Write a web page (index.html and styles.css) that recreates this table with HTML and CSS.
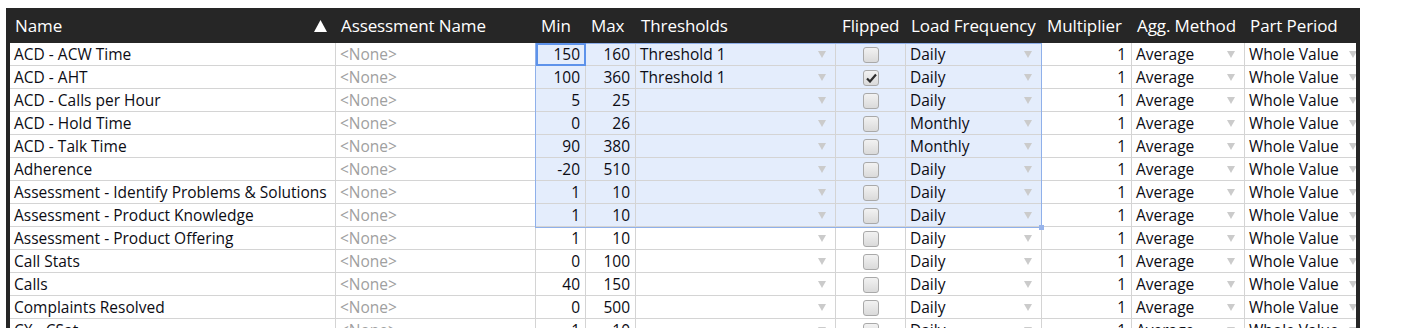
FILE: index.html
```html
<!DOCTYPE html>
<html>
<head>
<meta charset="utf-8">
<link rel="stylesheet" href="styles.css">
</head>
<body>
<div class="frame">
  <div class="grid-wrap">
    <table class="grid">
      <colgroup>
        <col class="c-name"><col class="c-assess"><col class="c-num"><col class="c-num"><col class="c-thr"><col class="c-flip"><col class="c-load"><col class="c-mult"><col class="c-agg"><col class="c-part">
      </colgroup>
      <thead>
        <tr>
          <th class="h-name">Name<svg class="sort" width="13" height="12" viewBox="0 0 13 12"><path d="M6.5 0L13 12H0Z"/></svg></th>
          <th>Assessment Name</th>
          <th class="h-num">Min</th>
          <th class="h-num">Max</th>
          <th>Thresholds</th>
          <th class="h-flip">Flipped</th>
          <th>Load Frequency</th>
          <th>Multiplier</th>
          <th>Agg. Method</th>
          <th>Part Period</th>
        </tr>
      </thead>
      <tbody id="rows"></tbody>
    </table>
    <div class="selection"></div>
    <div class="active-cell"></div>
    <div class="handle"></div>
  </div>
</div>
<script src="app.js"></script>
</body>
</html>
```

FILE: app.js
```js
const data = [
  ["ACD - ACW Time", 150, 160, "Threshold 1", false, "Daily"],
  ["ACD - AHT", 100, 360, "Threshold 1", true, "Daily"],
  ["ACD - Calls per Hour", 5, 25, "", false, "Daily"],
  ["ACD - Hold Time", 0, 26, "", false, "Monthly"],
  ["ACD - Talk Time", 90, 380, "", false, "Monthly"],
  ["Adherence", -20, 510, "", false, "Daily"],
  ["Assessment - Identify Problems & Solutions", 1, 10, "", false, "Daily"],
  ["Assessment - Product Knowledge", 1, 10, "", false, "Daily"],
  ["Assessment - Product Offering", 1, 10, "", false, "Daily"],
  ["Call Stats", 0, 100, "", false, "Daily"],
  ["Calls", 40, 150, "", false, "Daily"],
  ["Complaints Resolved", 0, 500, "", false, "Daily"],
  ["CX - CSat", 1, 10, "", false, "Daily"]
];
const arrow = '<svg class="dd" width="8" height="7" viewBox="0 0 8 7"><path d="M0 0H8L4 7Z"/></svg>';
const check = '<svg class="tick" width="11" height="10" viewBox="0 0 11 10"><path d="M1 5.5L4 8.5L10 1.5" fill="none" stroke="#2e2e2e" stroke-width="2.2"/></svg>';
const tbody = document.getElementById("rows");
tbody.innerHTML = data.map((r, i) => {
  const sel = i < 8 ? " sel" : "";
  return `<tr>
    <td class="name">${r[0].replace("&", "&amp;")}</td>
    <td class="none">&lt;None&gt;</td>
    <td class="num${sel}">${r[1]}</td>
    <td class="num${sel}">${r[2]}</td>
    <td class="drop${sel}"><span>${r[3]}</span>${arrow}</td>
    <td class="flip${sel}"><span class="cb">${r[4] ? check : ""}</span></td>
    <td class="drop${sel}"><span>${r[5]}</span>${arrow}</td>
    <td class="num">1</td>
    <td class="drop"><span>Average</span>${arrow}</td>
    <td class="drop last"><span>Whole Value</span>${arrow}</td>
  </tr>`;
}).join("");
```

FILE: styles.css
```css
html, body {
  margin: 0;
  padding: 0;
  background: #fff;
  overflow: hidden;
}
.frame {
  margin: 8px 0 0 6px;
  width: 1354px;
  background: #262626;
  padding: 0 4px;
  box-sizing: border-box;
}
.grid-wrap {
  position: relative;
}
.grid {
  table-layout: fixed;
  border-collapse: separate;
  border-spacing: 0;
  width: 1346px;
  font-family: "Open Sans", "Noto Sans", sans-serif;
}
.c-name { width: 326px; }
.c-assess { width: 200px; }
.c-num { width: 50px; }
.c-thr { width: 200px; }
.c-flip { width: 70px; }
.c-load { width: 136px; }
.c-mult { width: 90px; }
.c-agg { width: 113px; }
.c-part { width: 111px; }

th {
  height: 35px;
  padding: 0 0 0 5px;
  color: #fff;
  font-weight: 400;
  font-size: 17px;
  letter-spacing: -0.1px;
  text-align: left;
  white-space: nowrap;
  overflow: hidden;
  background: #262626;
}
.h-name {
  position: relative;
}
.sort {
  position: absolute;
  right: 9px;
  top: 12px;
  fill: #fff;
}
.h-num { padding-left: 5px; }
.h-flip { padding-left: 6px; }

td {
  height: 22px;
  padding: 0 4px;
  font-size: 15.5px;
  color: #0c0c14;
  background: #fff;
  border-right: 1px solid #d4d4d4;
  border-bottom: 1px solid #d4d4d4;
  white-space: nowrap;
  overflow: hidden;
  line-height: 22px;
}
td.last { border-right: none; }
td.name { padding-left: 4px; }
td.none { color: #a0a0a0; }
td.num { text-align: right; padding-right: 5px; }
td.sel { background: #e4edfc; }
td.drop {
  position: relative;
  padding-right: 18px;
}
.dd {
  position: absolute;
  right: 9px;
  top: 8px;
  fill: #cbcbcb;
}
td.last .dd { right: -1px; }
td.flip {
  text-align: center;
  padding: 0;
}
.cb {
  display: inline-block;
  vertical-align: middle;
  width: 14px;
  height: 14px;
  border: 1px solid #a9a9a9;
  border-radius: 3px;
  background: linear-gradient(#f2f2f2, #dadada);
  position: relative;
  top: -1px;
}
.tick {
  position: absolute;
  left: 2px;
  top: 2px;
}

.selection {
  position: absolute;
  left: 525px;
  top: 35px;
  width: 505px;
  height: 183px;
  border: 1px solid #8fb0ea;
  pointer-events: none;
}
.active-cell {
  position: absolute;
  left: 526px;
  top: 35px;
  width: 46px;
  height: 19px;
  border: 2px solid #5d92ea;
  pointer-events: none;
}
.handle {
  position: absolute;
  left: 1029px;
  top: 217px;
  width: 5px;
  height: 5px;
  background: #97b3ea;
}
```
